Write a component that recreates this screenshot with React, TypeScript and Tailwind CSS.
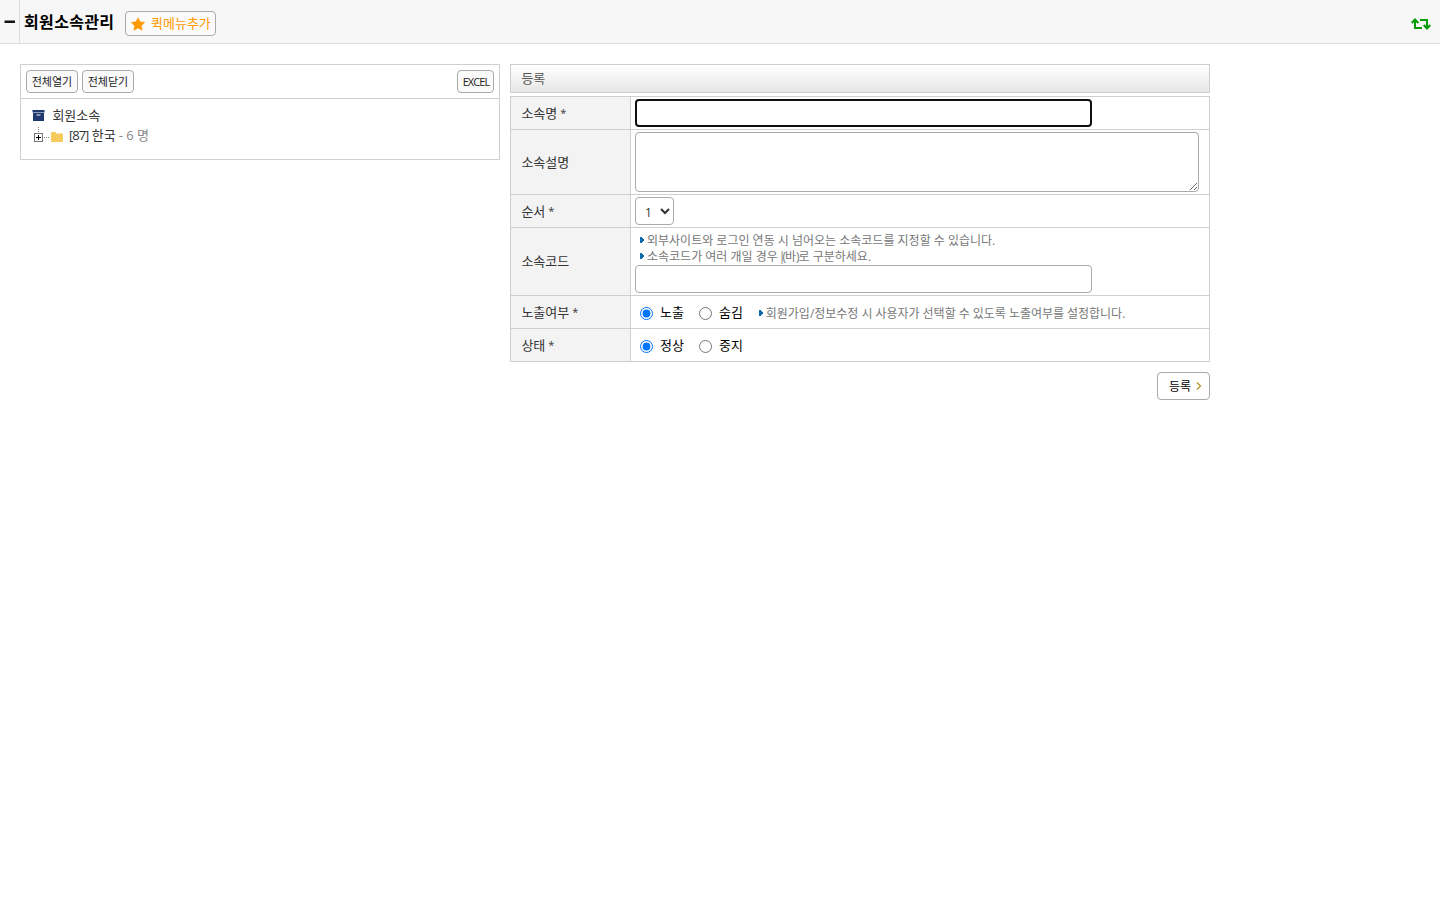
import { ReactNode } from 'react';

interface RowProps {
  label: string;
  height: string;
  required?: boolean;
  last?: boolean;
  children: ReactNode;
}

function FormRow({ label, height, required, last, children }: RowProps) {
  return (
    <div className={`flex ${height} ${last ? '' : 'border-b border-[#cfcfcf]'}`}>
      <div className="flex w-[120px] shrink-0 items-center border-r border-[#cfcfcf] bg-[#f3f3f3] pt-px pl-[10.4px] text-[13px] text-[#333]">
        {label}
        {required && <span className="ml-[3px] text-[11px]">*</span>}
      </div>
      <div className="min-w-0 flex-1 pl-1">{children}</div>
    </div>
  );
}

function Hint({ children }: { children: ReactNode }) {
  return (
    <p className="flex h-4 items-center text-[12px] leading-4 whitespace-nowrap text-[#777]">
      <svg width="4" height="6" viewBox="0 0 4 6" className="mr-[3px] shrink-0" shapeRendering="crispEdges">
        <path d="M0 0h2v1h1v1h1v2H3v1H2v1H0z" fill="#0d69a8" />
      </svg>
      <span className="pt-0.5">{children}</span>
    </p>
  );
}

function RadioGroup({ name, options }: { name: string; options: string[] }) {
  return (
    <div className="flex items-center text-[13px] text-black">
      {options.map((option, i) => (
        <label key={option} className="mr-[15px] flex items-center">
          <input type="radio" name={name} defaultChecked={i === 0} className="m-0 mr-[7px] h-[13px] w-[13px]" />
          {option}
        </label>
      ))}
    </div>
  );
}

const smallButton =
  'flex h-[23px] items-center justify-center rounded-[4px] border border-[#aaa] bg-[#fafafa] pt-0.5 text-[11px] text-[#222] whitespace-nowrap';

function Header() {
  return (
    <header className="flex h-11 border-b border-[#dcdcdc] bg-[#f7f7f7]">
      <button className="flex w-5 shrink-0 items-center border-r border-[#dcdcdc] pl-1">
        <svg width="12" height="4" viewBox="0 0 12 4">
          <rect x="0.5" y="0.5" width="10.5" height="2.5" rx="0.5" fill="#111" />
        </svg>
      </button>
      <h1 className="ml-1 pt-[10px] text-[16px] leading-6 font-bold tracking-[0.35px] whitespace-nowrap text-black">
        회원소속관리
      </h1>
      <button className="mt-[11px] ml-[10.6px] flex h-[25px] w-[91px] items-center rounded-[4px] border border-[#aaa] bg-[#fafafa] pl-[5px] text-[13px] whitespace-nowrap text-[#ff9900]">
        <svg width="14" height="14" viewBox="0 0 15 14" className="mr-1.5 shrink-0">
          <path
            d="M7.5.3 9.7 4.6l5 .7-3.600 3.500.9 4.900-4.500-2.300L3 13.700l.9-4.900L.3 5.300l5-.7z"
            fill="#ff9900"
            stroke="#ff9900"
            strokeWidth="0.6"
            strokeLinejoin="round"
          />
        </svg>
        <span className="pt-px">퀵메뉴추가</span>
      </button>
      <button className="mt-[18px] mr-[9px] ml-auto h-[12px]">
        <svg width="20" height="12" viewBox="0 0 20 12" fill="none" stroke="#089b08" strokeWidth="2">
          <path d="M4 2v8h7M.700 5 4 1.500 7.300 5" />
          <path d="M9 2h7v8M12.700 7l3.300 3.500L19.300 7" />
        </svg>
      </button>
    </header>
  );
}

function TreePanel() {
  return (
    <section className="h-24 w-[480px] shrink-0 border border-[#cfcfcf]">
      <div className="flex h-[34px] gap-1 border-b border-[#cfcfcf] px-[5px] pt-[5px]">
        <button className={`${smallButton} w-[52px]`}>전체열기</button>
        <button className={`${smallButton} w-[52px]`}>전체닫기</button>
        <button className={`${smallButton} ml-auto w-[37px] pl-px tracking-[-0.9px]`}>EXCEL</button>
      </div>
      <div className="pt-[7px] pl-[11px] text-[13px] text-[#333]">
        <div className="flex h-5 items-center">
          <svg width="13" height="11" viewBox="0 0 13 11" className="mr-[7.4px] mb-px">
            <path d="M.500 0h12v2.500H.500zM1 3h11v8H1z" fill="#1f3872" />
            <path d="M4.500 4.500h4v1h-4z" fill="#fff" />
          </svg>
          <span>회원소속</span>
        </div>
        <div className="flex h-5 items-center pl-px">
          <svg width="16" height="20" viewBox="0 0 16 20" className="mr-0.5 shrink-0" shapeRendering="crispEdges">
            <path d="M5.500 1v6M11 11.500h5" stroke="#888" strokeDasharray="1 1" fill="none" />
            <path d="M1.500 7.500h8v8h-8z" stroke="#777" fill="#fff" />
            <path d="M3 11.500h5M5.500 9v5" stroke="#000" fill="none" />
          </svg>
          <svg width="12" height="10" viewBox="0 0 12 10" className="mt-px mr-1.5 shrink-0">
            <path d="M0 1q0-1 1-1h3q1 0 1 1v.5h6q1 0 1 1V9q0 1-1 1H1q-1 0-1-1z" fill="#f5ca5a" />
          </svg>
          <span className="tracking-[-1px]">[87]</span>
          <span className="ml-[3.400px]">한국</span>
          <span className="ml-[3px] text-[#888]">- 6 명</span>
        </div>
      </div>
    </section>
  );
}

export default function App() {
  return (
    <div className="min-h-screen bg-white font-['Open_Sans','Noto_Sans_CJK_KR',sans-serif]">
      <Header />
      <main className="flex gap-2.5 px-5 pt-5">
        <TreePanel />
        <section className="w-[700px]">
          <h2 className="flex h-[29px] items-center border border-[#cfcfcf] bg-linear-to-b from-white to-[#e6e6e6] pl-[10.4px] text-[13px] text-[#555]">
            등록
          </h2>
          <form className="mt-[3px] border border-[#cfcfcf]">
            <FormRow label="소속명" height="h-[33px]" required>
              <input className="mt-0.5 block h-7 w-[457px] rounded-[4px] border-2 border-[#101010]" />
            </FormRow>
            <FormRow label="소속설명" height="h-[65px]">
              <textarea className="mt-0.5 block h-[60px] w-[564px] rounded-[4px] border border-[#aaa]" />
            </FormRow>
            <FormRow label="순서" height="h-[33px]" required>
              <select className="mt-0.5 block h-7 w-[39px] rounded-[4px] border border-[#aaa] bg-white pt-0.5 pl-[5px] text-[12px] text-[#333]">
                <option>1</option>
              </select>
            </FormRow>
            <FormRow label="소속코드" height="h-[68px]">
              <div className="pt-1 pl-[5px]">
                <Hint>외부사이트와 로그인 연동 시 넘어오는 소속코드를 지정할 수 있습니다.</Hint>
                <Hint>
                  소속코드가 여러 개일 경우
                  <span className="ml-px tracking-[-3px]">|</span>
                  <span className="tracking-[-1px]">(</span>바<span className="tracking-[-1px]">)</span>로 구분하세요.
                </Hint>
              </div>
              <input className="mt-px block h-7 w-[457px] rounded-[4px] border border-[#aaa]" />
            </FormRow>
            <FormRow label="노출여부" height="h-[33px]" required>
              <div className="flex h-full items-center pt-0.5 pl-[5px]">
                <RadioGroup name="display" options={['노출', '숨김']} />
                <div className="ml-px tracking-[-0.03px]">
                  <Hint>회원가입/정보수정 시 사용자가 선택할 수 있도록 노출여부를 설정합니다.</Hint>
                </div>
              </div>
            </FormRow>
            <FormRow label="상태" height="h-[32px]" required last>
              <div className="flex h-full items-center pt-0.5 pl-[5px]">
                <RadioGroup name="status" options={['정상', '중지']} />
              </div>
            </FormRow>
          </form>
          <div className="mt-2.5 flex justify-end">
            <button className="flex h-7 w-[53px] items-center rounded-[4px] border border-[#aaa] bg-white pl-[11px] text-[12px] whitespace-nowrap text-black">
              <span className="pt-0.5">등록</span>
              <svg width="6" height="8" viewBox="0 0 6 8" className="ml-[5px] shrink-0">
                <path d="M1 .5 4.500 4 1 7.500" stroke="#b59a2b" strokeWidth="1.400" fill="none" />
              </svg>
            </button>
          </div>
        </section>
      </main>
    </div>
  );
}
